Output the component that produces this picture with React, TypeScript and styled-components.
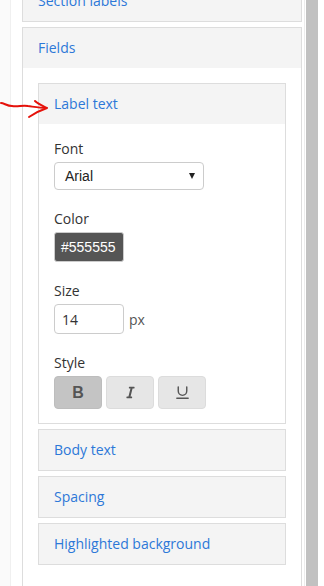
import React from "react";
import styled, { createGlobalStyle } from "styled-components";
import { FaItalic } from "react-icons/fa";
import { Underline } from "lucide-react";

const GlobalStyle = createGlobalStyle`
  html, body {
    margin: 0;
    padding: 0;
    background: #fff;
  }
  body {
    font-family: "Open Sans", "Noto Sans", sans-serif;
    font-size: 14px;
    color: #333;
  }
`;

const Page = styled.div`
  position: relative;
  display: flex;
  width: 324px;
  height: 586px;
  overflow: hidden;
`;

const Gutter = styled.div`
  width: 10px;
  background: #fafafa;
  border-right: 1px solid #f0f0f0;
`;

const Content = styled.div`
  flex: 1;
  padding: 0 2px 0 11px;
  display: flex;
  flex-direction: column;
  gap: 5px;
`;

const ScrollTrack = styled.div`
  width: 20px;
  box-sizing: border-box;
  border-left: 1px solid #ececec;
  padding: 0 6px 0 1px;
  display: flex;
`;

const ScrollThumb = styled.div`
  flex: 1;
  background: #c1c1c1;
`;

const Panel = styled.div<{ $cutTop?: boolean; $fill?: boolean }>`
  border: 1px solid #ddd;
  background: #fff;
  margin-top: ${p => (p.$cutTop ? "-20px" : "0")};
  flex: ${p => (p.$fill ? "1" : "none")};
  ${p => (p.$fill ? "border-bottom: none;" : "")}
`;

const PanelHeader = styled.div`
  background: #f4f4f4;
  color: #2d78d8;
  line-height: 20px;
  padding: 10px 15px;
`;

const PanelBody = styled.div`
  padding: 15px 15px 0;
  display: flex;
  flex-direction: column;
  gap: 5px;
`;

const InnerBody = styled.div`
  padding: 15px 15px 14px;
  display: flex;
  flex-direction: column;
  gap: 19px;
`;

const Field = styled.div`
  display: flex;
  flex-direction: column;
  align-items: flex-start;
`;

const Label = styled.div`
  line-height: 20px;
  margin-bottom: 3px;
  color: #333;
`;

const SelectBox = styled.div`
  box-sizing: border-box;
  width: 150px;
  height: 28px;
  border: 1px solid #ccc;
  border-radius: 4px;
  display: flex;
  align-items: center;
  justify-content: space-between;
  padding: 0 8px 0 10px;
  font-family: "Liberation Sans", Arial, sans-serif;
  color: #222;
`;

const Caret = styled.span`
  width: 0;
  height: 0;
  border-left: 3.5px solid transparent;
  border-right: 3.5px solid transparent;
  border-top: 6px solid #222;
`;

const Swatch = styled.div<{ $color: string }>`
  box-sizing: border-box;
  width: 70px;
  height: 30px;
  border-radius: 3px;
  border: 1px solid #ccc;
  background: ${p => p.$color};
  color: #fff;
  font-family: "Liberation Sans", Arial, sans-serif;
  font-size: 14px;
  display: flex;
  align-items: center;
  padding-left: 6px;
`;

const InputRow = styled.div`
  display: flex;
  align-items: center;
`;

const TextInput = styled.div`
  box-sizing: border-box;
  width: 70px;
  height: 30px;
  border: 1px solid #ccc;
  border-radius: 4px;
  padding-left: 7px;
  display: flex;
  align-items: center;
  color: #333;
`;

const Unit = styled.span`
  margin-left: 5px;
  color: #555;
`;

const ButtonGroup = styled.div`
  display: flex;
  gap: 4px;
`;

const StyleButton = styled.div<{ $active?: boolean }>`
  box-sizing: border-box;
  width: 48px;
  height: 33px;
  border-radius: 4px;
  border: 1px solid ${p => (p.$active ? "#bdbdbd" : "#dcdcdc")};
  background: ${p => (p.$active ? "#c4c4c4" : "#e6e6e6")};
  color: #555;
  display: flex;
  align-items: center;
  justify-content: center;
  font-family: "Liberation Sans", Arial, sans-serif;
  font-weight: bold;
  font-size: 16px;
`;

const Arrow = styled.svg`
  position: absolute;
  left: 0;
  top: 96px;
`;

const SubPanel: React.FC<{ title: string; children?: React.ReactNode }> = ({ title, children }) => (
  <Panel>
    <PanelHeader>{title}</PanelHeader>
    {children}
  </Panel>
);

export default function App() {
  return (
    <>
      <GlobalStyle />
      <Page>
        <Gutter />
        <Content>
          <Panel $cutTop>
            <PanelHeader>Section labels</PanelHeader>
          </Panel>
          <Panel $fill>
            <PanelHeader>Fields</PanelHeader>
            <PanelBody>
              <SubPanel title="Label text">
                <InnerBody>
                  <Field>
                    <Label>Font</Label>
                    <SelectBox>
                      Arial
                      <Caret />
                    </SelectBox>
                  </Field>
                  <Field>
                    <Label>Color</Label>
                    <Swatch $color="#555555">#555555</Swatch>
                  </Field>
                  <Field>
                    <Label>Size</Label>
                    <InputRow>
                      <TextInput>14</TextInput>
                      <Unit>px</Unit>
                    </InputRow>
                  </Field>
                  <Field>
                    <Label>Style</Label>
                    <ButtonGroup>
                      <StyleButton $active>B</StyleButton>
                      <StyleButton>
                        <FaItalic size={13} />
                      </StyleButton>
                      <StyleButton>
                        <Underline size={17} strokeWidth={2} />
                      </StyleButton>
                    </ButtonGroup>
                  </Field>
                </InnerBody>
              </SubPanel>
              <SubPanel title="Body text" />
              <SubPanel title="Spacing" />
              <SubPanel title="Highlighted background" />
            </PanelBody>
          </Panel>
        </Content>
        <ScrollTrack>
          <ScrollThumb />
        </ScrollTrack>
        <Arrow width="50" height="26" viewBox="0 0 50 26">
          <path
            d="M1 7 C4 7 7 10 12 10 C18 11 22 9 28 10 C35 11 40 12 46 12"
            fill="none"
            stroke="#e5120b"
            strokeWidth="2"
            strokeLinecap="round"
          />
          <path
            d="M35 5 C38 8 43 10 47 12 C41 14 35 17 29 21"
            fill="none"
            stroke="#e5120b"
            strokeWidth="2"
            strokeLinecap="round"
            strokeLinejoin="round"
          />
        </Arrow>
      </Page>
    </>
  );
}
